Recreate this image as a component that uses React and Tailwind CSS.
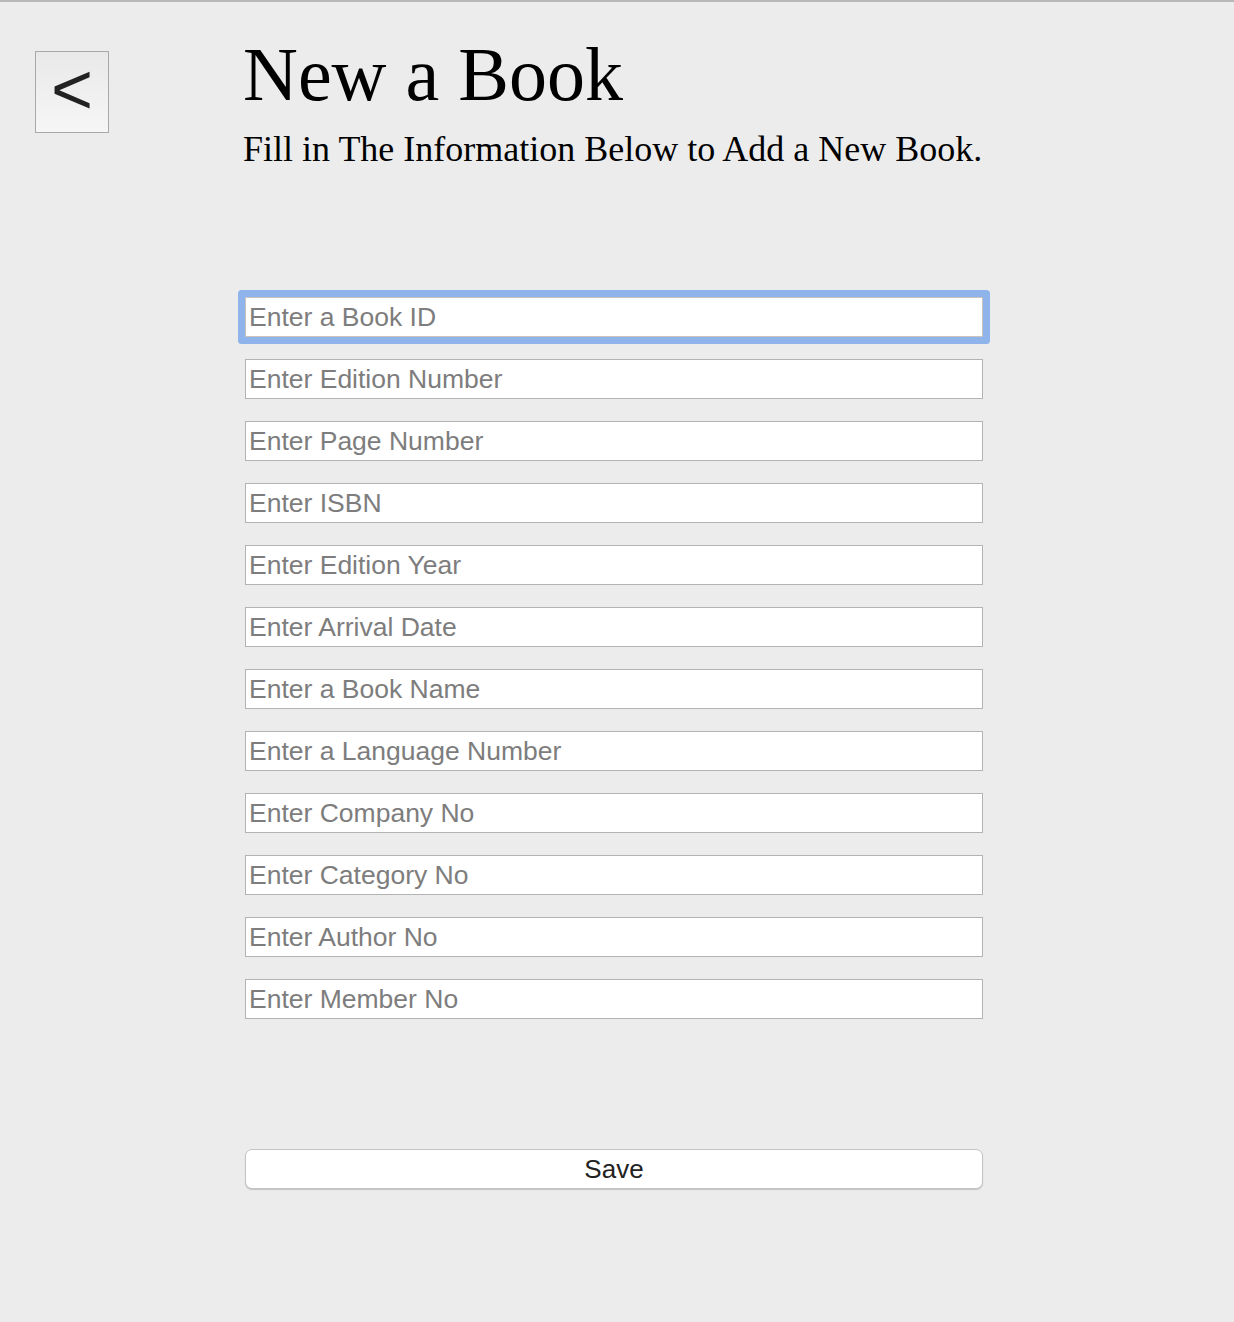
const fields = [
  'Enter a Book ID',
  'Enter Edition Number',
  'Enter Page Number',
  'Enter ISBN',
  'Enter Edition Year',
  'Enter Arrival Date',
  'Enter a Book Name',
  'Enter a Language Number',
  'Enter Company No',
  'Enter Category No',
  'Enter Author No',
  'Enter Member No',
];

export default function App() {
  return (
    <div className="min-h-[1322px] bg-[#ececec] border-t-2 border-[#b8b8b8] flex">
      {/* Back */}
      <div className="w-[243px] pl-[35px] pt-[49px]">
        <button className="w-[74px] h-[82px] border border-[#a8a8a8] bg-gradient-to-b from-[#e9e9e9] to-[#f6f6f6] flex items-center justify-center text-[#222] text-[72px] leading-none font-['Liberation_Sans',sans-serif] pb-[6px]">
          &lt;
        </button>
      </div>

      {/* Form */}
      <div className="w-[741px] flex flex-col">
        <h1 className="mt-[34px] text-[76px] leading-none text-black font-['Liberation_Serif',serif]">
          New a Book
        </h1>
        <p className="mt-[19px] text-[36px] leading-none text-black font-['Liberation_Serif',serif]">
          Fill in The Information Below to Add a New Book.
        </p>

        <div className="mt-[130px] flex flex-col gap-[22px] pl-[2px]">
          {fields.map((f, i) => (
            <input
              key={f}
              placeholder={f}
              className={
                'w-[738px] h-[40px] bg-white border px-[3px] text-[26.5px] text-[#222] placeholder:text-[#7d7d7d] font-[\'Liberation_Sans\',sans-serif] outline-none ' +
                (i === 0
                  ? 'border-[#c9c2bd] rounded-[1px] shadow-[0_0_0_7px_#8fb4ec]'
                  : 'border-[#b3b3b3]')
              }
            />
          ))}
        </div>

        <button className="mt-[130px] ml-[2px] w-[738px] h-[40px] bg-white border border-[#c4c4c4] rounded-[7px] shadow-[0_1px_1px_rgba(0,0,0,0.18)] text-[26px] text-[#222] font-['Liberation_Sans',sans-serif] leading-none">
          Save
        </button>
      </div>
    </div>
  );
}
